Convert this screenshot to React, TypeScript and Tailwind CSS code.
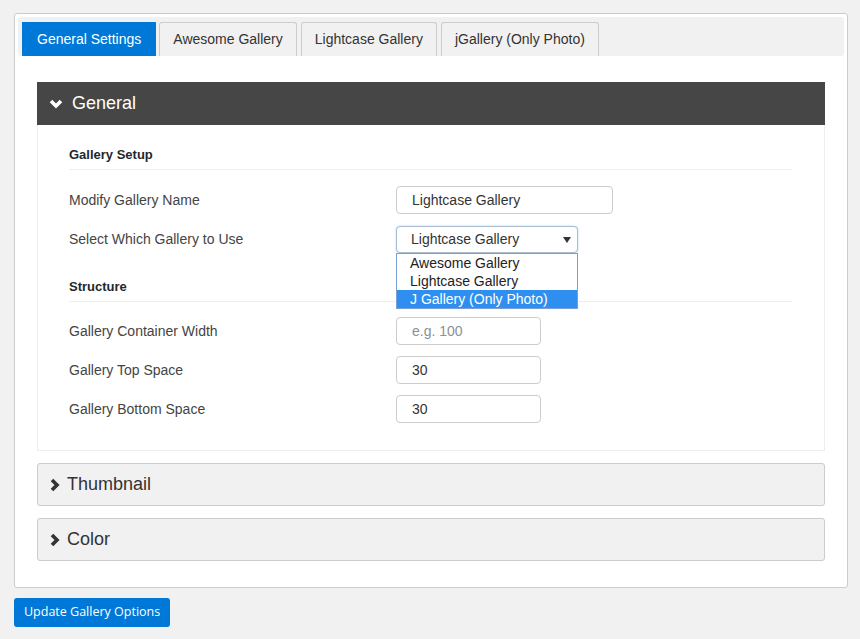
import { ReactNode } from 'react';

const tabs = ['General Settings', 'Awesome Gallery', 'Lightcase Gallery', 'jGallery (Only Photo)'];
const galleryOptions = ['Awesome Gallery', 'Lightcase Gallery', 'J Gallery (Only Photo)'];

const ChevronDown = () => (
	<svg className="h-[10px] w-[14px]" viewBox="0 0 14 10">
		<polyline points="2,2 7,7 12,2" fill="none" stroke="white" strokeWidth="3.6" />
	</svg>
);

const ChevronRight = () => (
	<svg className="h-[14px] w-[10px]" viewBox="0 0 10 14">
		<polyline points="2,2 7,7 2,12" fill="none" stroke="#333" strokeWidth="3.6" />
	</svg>
);

const SectionTitle = ({ children, top }: { children: ReactNode; top: string }) => (
	<div className={`${top} border-b border-[#eee] pb-[5px] text-[13px] leading-[18px] font-bold text-[#23282d]`}>{children}</div>
);

const Row = ({ label, children }: { label: string; children: ReactNode }) => (
	<div className="flex items-center">
		<div className="w-[327px] shrink-0 text-[14px] text-[#444]">{label}</div>
		{children}
	</div>
);

const TextBox = ({ value, placeholder, width }: { value?: string; placeholder?: string; width: string }) => (
	<div className={`${width} flex h-[28px] items-center rounded-[4px] border border-[#ccc] bg-white px-[15px] text-[14px] ${value ? 'text-[#333]' : 'text-[#8c8f94]'}`}>
		{value ?? placeholder}
	</div>
);

const Collapsed = ({ title, top }: { title: string; top: string }) => (
	<div className={`${top} flex h-[43px] items-center gap-[7px] rounded-[3px] border border-[#ccc] bg-[#f1f1f1] pl-[12px] text-[18px] text-[#333]`}>
		<ChevronRight />
		<span>{title}</span>
	</div>
);

export default function App() {
	return (
		<div className="min-h-screen bg-[#f1f1f1] px-[14px] pt-[13px] pb-[12px] [font-family:'Liberation_Sans',Arial,sans-serif]">
			<div className="w-[834px] rounded-[3px] border border-[#ccc] bg-white p-[3px]">
				{/* tab bar */}
				<div className="flex h-[39px] items-end gap-[3px] rounded-[3px] bg-[#f1f1f1] pl-[4px]">
					{tabs.map((tab, i) =>
						i === 0 ? (
							<div key={tab} className="flex h-[34px] items-center bg-[#0078d7] px-[15px] text-[14px] text-white">
								{tab}
							</div>
						) : (
							<div key={tab} className={`${i > 1 ? 'ml-[1px]' : ''} flex h-[34px] items-center rounded-t-[3px] border border-b-0 border-[#ccc] px-[13px] text-[14px] text-[#333]`}>
								{tab}
							</div>
						),
					)}
				</div>

				<div className="px-[19px] pt-[26px] pb-[23px]">
					<div className="flex h-[43px] items-center gap-[9px] bg-[#464646] pl-[12px] text-[18px] text-white">
						<ChevronDown />
						<span>General</span>
					</div>

					<div className="border border-t-0 border-[#eee] pr-[32px] pb-[27px] pl-[31px]">
						<SectionTitle top="pt-[21px]">Gallery Setup</SectionTitle>
						<div className="mt-[16px] flex flex-col gap-[12px]">
							<Row label="Modify Gallery Name">
								<TextBox value="Lightcase Gallery" width="w-[217px]" />
							</Row>
							<Row label="Select Which Gallery to Use">
								<div className="relative">
									<div className="flex h-[27px] w-[182px] items-center justify-between rounded-[4px] border border-[#a9bcd0] bg-white pr-[6px] pl-[14px] text-[14px] text-[#333] shadow-[0_0_2px_#9fd3ee]">
										<span>Lightcase Gallery</span>
										<svg className="h-[6px] w-[8px]" viewBox="0 0 8 6">
											<polygon points="0,0 8,0 4,6" fill="#333" />
										</svg>
									</div>
									<div className="absolute top-[27px] left-0 z-10 w-[182px] border border-[#7a9fd6] bg-white text-[14px] leading-[18px] text-[#222]">
										{galleryOptions.map((opt, i) => (
											<div key={opt} className={i === 2 ? 'bg-[#2e8ff0] pl-[13px] text-white' : 'pl-[13px]'}>
												{opt}
											</div>
										))}
									</div>
								</div>
							</Row>
						</div>

						<SectionTitle top="mt-[25px]">Structure</SectionTitle>
						<div className="mt-[15px] flex flex-col gap-[11px]">
							<Row label="Gallery Container Width">
								<TextBox placeholder="e.g. 100" width="w-[145px]" />
							</Row>
							<Row label="Gallery Top Space">
								<TextBox value="30" width="w-[145px]" />
							</Row>
							<Row label="Gallery Bottom Space">
								<TextBox value="30" width="w-[145px]" />
							</Row>
						</div>
					</div>

					<Collapsed title="Thumbnail" top="mt-[12px]" />
					<Collapsed title="Color" top="mt-[12px]" />
				</div>
			</div>

			<button type="button" className="mt-[10px] h-[29px] rounded-[3px] bg-[#0078d7] px-[10px] [font-family:'Open_Sans',sans-serif] text-[12.5px] text-white">
				Update Gallery Options
			</button>
		</div>
	);
}
